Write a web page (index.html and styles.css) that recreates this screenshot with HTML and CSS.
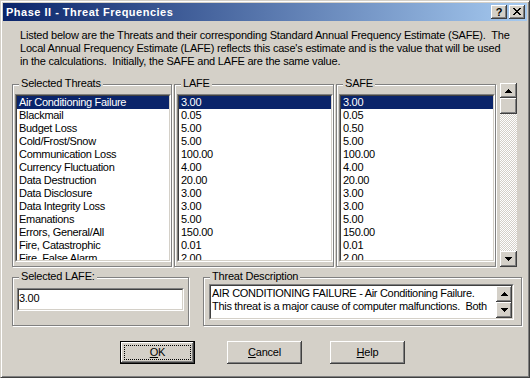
FILE: index.html
```html
<!DOCTYPE html>
<html>
<head>
<meta charset="utf-8">
<title>Phase II - Threat Frequencies</title>
<link rel="stylesheet" href="styles.css">
</head>
<body>
<div class="window">
  <div class="titlebar">
    <span class="title">Phase II - Threat Frequencies</span>
    <div class="tbtns">
      <span class="tbtn raised help">?</span>
      <span class="tbtn raised close"><svg width="8" height="7" viewBox="0 0 8 7" shape-rendering="crispEdges"><path d="M0 0h2v1H0zM6 0h2v1H6zM1 1h2v1H1zM5 1h2v1H5zM2 2h4v1H2zM3 3h2v1H3zM2 4h4v1H2zM1 5h2v1H1zM5 5h2v1H5zM0 6h2v1H0zM6 6h2v1H6z" fill="#000"/></svg></span>
    </div>
  </div>

  <p class="intro">Listed below are the Threats and their corresponding Standard Annual Frequency Estimate (SAFE).&nbsp; The<br>Local Annual Frequency Estimate (LAFE) reflects this case's estimate and is the value that will be used<br>in the calculations.&nbsp; Initially, the SAFE and LAFE are the same value.</p>

  <div class="lists">
    <div class="group g-list">
      <span class="glabel">Selected Threats</span>
      <div class="listbox"><div class="listin">
        <div class="row sel">Air Conditioning Failure</div>
        <div class="row">Blackmail</div>
        <div class="row">Budget Loss</div>
        <div class="row">Cold/Frost/Snow</div>
        <div class="row">Communication Loss</div>
        <div class="row">Currency Fluctuation</div>
        <div class="row">Data Destruction</div>
        <div class="row">Data Disclosure</div>
        <div class="row">Data Integrity Loss</div>
        <div class="row">Emanations</div>
        <div class="row">Errors, General/All</div>
        <div class="row">Fire, Catastrophic</div>
        <div class="row">Fire, False Alarm</div>
      </div></div>
    </div>
    <div class="group g-list">
      <span class="glabel">LAFE</span>
      <div class="listbox"><div class="listin">
        <div class="row sel">3.00</div>
        <div class="row">0.05</div>
        <div class="row">5.00</div>
        <div class="row">5.00</div>
        <div class="row">100.00</div>
        <div class="row">4.00</div>
        <div class="row">20.00</div>
        <div class="row">3.00</div>
        <div class="row">3.00</div>
        <div class="row">5.00</div>
        <div class="row">150.00</div>
        <div class="row">0.01</div>
        <div class="row">2.00</div>
      </div></div>
    </div>
    <div class="group g-list">
      <span class="glabel">SAFE</span>
      <div class="listbox"><div class="listin">
        <div class="row sel">3.00</div>
        <div class="row">0.05</div>
        <div class="row">0.50</div>
        <div class="row">5.00</div>
        <div class="row">100.00</div>
        <div class="row">4.00</div>
        <div class="row">20.00</div>
        <div class="row">3.00</div>
        <div class="row">3.00</div>
        <div class="row">5.00</div>
        <div class="row">150.00</div>
        <div class="row">0.01</div>
        <div class="row">2.00</div>
      </div></div>
    </div>
    <div class="vscroll">
      <div class="sbtn raised sb-up"><svg width="7" height="4" viewBox="0 0 7 4" shape-rendering="crispEdges"><path d="M3 0h1v1H3zM2 1h3v1H2zM1 2h5v1H1zM0 3h7v1H0z" fill="#000"/></svg></div>
      <div class="sbtn raised sb-thumb"></div>
      <div class="track"></div>
      <div class="sbtn raised sb-down"><svg width="7" height="4" viewBox="0 0 7 4" shape-rendering="crispEdges"><path d="M0 0h7v1H0zM1 1h5v1H1zM2 2h3v1H2zM3 3h1v1H3z" fill="#000"/></svg></div>
    </div>
  </div>

  <div class="lower">
    <div class="group g-edit">
      <span class="glabel">Selected LAFE:</span>
      <div class="edit"><div class="editin">3.00</div></div>
    </div>
    <div class="group g-desc">
      <span class="glabel">Threat Description</span>
      <div class="descbox"><div class="descin">
        <div class="desctext">AIR CONDITIONING FAILURE - Air Conditioning Failure.<br>This threat is a major cause of computer malfunctions.&nbsp; Both</div>
        <div class="miniscroll">
          <div class="sbtn raised mini"><svg width="7" height="4" viewBox="0 0 7 4" shape-rendering="crispEdges"><path d="M3 0h1v1H3zM2 1h3v1H2zM1 2h5v1H1zM0 3h7v1H0z" fill="#000"/></svg></div>
          <div class="sbtn raised mini"><svg width="7" height="4" viewBox="0 0 7 4" shape-rendering="crispEdges"><path d="M0 0h7v1H0zM1 1h5v1H1zM2 2h3v1H2zM3 3h1v1H3z" fill="#000"/></svg></div>
        </div>
      </div></div>
    </div>
  </div>

  <div class="buttons">
    <button class="btn default"><span class="focus"></span><span class="btxt"><u>O</u>K</span></button>
    <button class="btn b-cancel"><span class="btxt"><u>C</u>ancel</span></button>
    <button class="btn b-help"><span class="btxt"><u>H</u>elp</span></button>
  </div>
</div>
</body>
</html>
```

FILE: styles.css
```css
html, body {
  margin: 0;
  padding: 0;
  background: #d4d0c8;
}
body {
  font-family: "Liberation Sans", Arial, sans-serif;
  font-size: 11px;
  line-height: 13px;
  color: #000;
}
.window {
  width: 530px;
  height: 378px;
  box-sizing: border-box;
  background: #d4d0c8;
  border: 1px solid;
  border-color: #d4d0c8 #404040 #404040 #d4d0c8;
  box-shadow: inset 1px 1px #fff, inset -1px -1px #808080;
  padding: 2px;
}
.titlebar {
  height: 18px;
  background: linear-gradient(to right, #0a246a, #a6caf0);
  display: flex;
  align-items: center;
  justify-content: space-between;
  padding: 0 2px 0 3px;
}
.title {
  color: #fff;
  font-weight: bold;
  font-size: 11px;
  letter-spacing: 0.5px;
}
.tbtns {
  display: flex;
  gap: 2px;
}
.raised {
  background: #d4d0c8;
  box-shadow: inset -1px -1px #404040, inset 1px 1px #fff, inset -2px -2px #808080, inset 2px 2px #d4d0c8;
}
.tbtn {
  width: 16px;
  height: 14px;
  display: flex;
  align-items: center;
  justify-content: center;
  box-sizing: border-box;
}
.tbtn.help {
  font-weight: bold;
  font-size: 11px;
  line-height: 14px;
  padding: 0 0 1px 0;
}
.tbtn.close svg {
  margin-top: -1px;
}
.intro {
  margin: 8px 0 0 17px;
  letter-spacing: -0.2px;
}
.lists {
  display: flex;
  align-items: flex-start;
  margin: 16px 0 0 9px;
  gap: 2px;
}
.group {
  position: relative;
  box-sizing: border-box;
  border: 1px solid #808080;
  box-shadow: inset 1px 1px #fff, 1px 1px #fff;
}
.glabel {
  position: absolute;
  top: -8px;
  left: 6px;
  padding: 0 2px;
  background: #d4d0c8;
  white-space: nowrap;
  letter-spacing: -0.2px;
}
.g-list {
  width: 160px;
  height: 183px;
}
.listbox {
  margin: 9px 0 0 2px;
  width: 156px;
  height: 168px;
  box-sizing: border-box;
  border: 1px solid;
  border-color: #808080 #fff #fff #808080;
}
.listin {
  height: 100%;
  box-sizing: border-box;
  border: 1px solid;
  border-color: #404040 #d4d0c8 #d4d0c8 #404040;
  background: #fff;
  overflow: hidden;
}
.row {
  height: 13px;
  padding-left: 2px;
  white-space: nowrap;
  letter-spacing: -0.3px;
}
.row.sel {
  background: #0a246a;
  color: #fff;
}
.vscroll {
  width: 17px;
  height: 184px;
  margin: -1px 0 0 2px;
  display: flex;
  flex-direction: column;
}
.sbtn {
  display: flex;
  align-items: center;
  justify-content: center;
  box-sizing: border-box;
}
.sb-up {
  height: 15px;
}
.sb-thumb {
  height: 16px;
}
.sb-down {
  height: 16px;
}
.track {
  flex: 1;
  background: repeating-conic-gradient(#d4d0c8 0 25%, #fff 0 50%) 0 0 / 2px 2px;
}
.lower {
  display: flex;
  margin: 10px 0 0 9px;
  gap: 14px;
}
.g-edit {
  width: 177px;
  height: 49px;
}
.g-desc {
  width: 319px;
  height: 49px;
}
.edit {
  margin: 10px 0 0 4px;
  width: 167px;
  height: 23px;
  box-sizing: border-box;
  border: 1px solid;
  border-color: #808080 #fff #fff #808080;
}
.editin {
  height: 100%;
  box-sizing: border-box;
  border: 1px solid;
  border-color: #404040 #d4d0c8 #d4d0c8 #404040;
  background: #fff;
  padding: 2px 0 0 0;
  letter-spacing: -0.3px;
}
.descbox {
  margin: 6px 0 0 5px;
  width: 305px;
  height: 36px;
  box-sizing: border-box;
  border: 1px solid;
  border-color: #808080 #fff #fff #808080;
}
.descin {
  height: 100%;
  box-sizing: border-box;
  border: 1px solid;
  border-color: #404040 #d4d0c8 #d4d0c8 #404040;
  background: #fff;
  display: flex;
}
.desctext {
  flex: 1;
  padding: 1px 0 0 1px;
  white-space: nowrap;
  overflow: hidden;
  letter-spacing: -0.3px;
}
.miniscroll {
  width: 16px;
  display: flex;
  flex-direction: column;
}
.mini {
  height: 16px;
}
.buttons {
  display: flex;
  margin: 15px 0 0 117px;
}
.btn {
  position: relative;
  width: 75px;
  height: 23px;
  padding: 0;
  border: none;
  margin: 0;
  font: inherit;
  color: #000;
  background: #d4d0c8;
  box-shadow: inset -1px -1px #404040, inset 1px 1px #fff, inset -2px -2px #808080, inset 2px 2px #d4d0c8;
  display: flex;
  align-items: center;
  justify-content: center;
}
.btn.default {
  box-shadow: inset 0 0 0 1px #000, inset -2px -2px #404040, inset 2px 2px #fff, inset -3px -3px #808080;
}
.focus {
  position: absolute;
  left: 4px;
  top: 4px;
  right: 4px;
  bottom: 4px;
  border: 1px dotted #000;
}
.btxt {
  letter-spacing: -0.2px;
}
.b-cancel {
  margin-left: 32px;
}
.b-help {
  margin-left: 28px;
}
```
